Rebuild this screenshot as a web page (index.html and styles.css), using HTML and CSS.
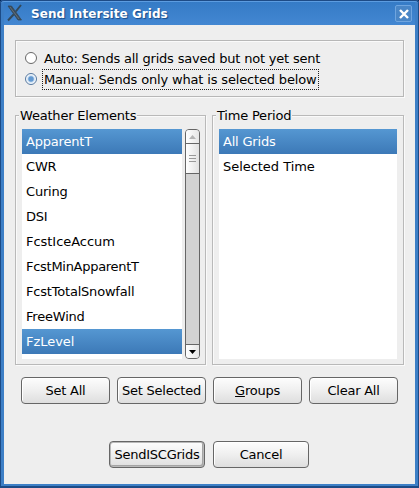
FILE: index.html
```html
<!DOCTYPE html>
<html lang="en">
<head>
<meta charset="utf-8">
<title>Send Intersite Grids</title>
<link rel="stylesheet" href="styles.css">
</head>
<body>
<div class="window">
  <header class="titlebar">
    <svg class="app-icon" width="16" height="18" viewBox="0 0 16 18">
      <path d="M1 2h3.5l10 14H11z" fill="#3d4b58" stroke="#34495a" stroke-width=".8"/>
      <path d="M14 1 8.8 7.5M6.8 10.2 1 16.5" stroke="#34495a" stroke-width="2"/>
      <path d="M3 3l9 12" stroke="#71818d" stroke-width=".7"/>
    </svg>
    <h1 class="title">Send Intersite Grids</h1>
    <button class="close" aria-label="Close">
      <svg width="10" height="10" viewBox="0 0 10 10"><path d="M1 1l8 8M9 1L1 9" stroke="#fff" stroke-width="2.4"/></svg>
    </button>
  </header>
  <main class="content">
    <section class="modes">
      <label class="mode"><span class="radio"></span><span class="mode-text">Auto: Sends all grids saved but not yet sent</span></label>
      <label class="mode"><span class="radio checked"></span><span class="mode-text focused">Manual: Sends only what is selected below</span></label>
    </section>
    <div class="panels">
      <section class="panel">
        <h2 class="legend">Weather Elements</h2>
        <div class="panel-body">
          <ul class="list">
            <li class="selected">ApparentT</li>
            <li>CWR</li>
            <li>Curing</li>
            <li>DSI</li>
            <li class="even">FcstIceAccum</li>
            <li class="tight">FcstMinApparentT</li>
            <li>FcstTotalSnowfall</li>
            <li>FreeWind</li>
            <li class="selected even">FzLevel</li>
          </ul>
          <div class="scrollbar">
            <div class="arrow up"><svg width="7" height="4" viewBox="0 0 7 4"><path d="M0 4 3.5 0 7 4z" fill="#b5b5b5"/></svg></div>
            <div class="thumb"><i></i><i></i><i></i></div>
            <div class="arrow down"><svg width="7" height="4" viewBox="0 0 7 4"><path d="M0 0h7L3.5 4z" fill="#000"/></svg></div>
          </div>
        </div>
      </section>
      <section class="panel">
        <h2 class="legend">Time Period</h2>
        <div class="panel-body">
          <ul class="list">
            <li class="selected">All Grids</li>
            <li class="even">Selected Time</li>
          </ul>
        </div>
      </section>
    </div>
    <div class="actions">
      <button class="btn">Set All</button>
      <button class="btn">Set Selected</button>
      <button class="btn"><span><u>G</u>roups</span></button>
      <button class="btn">Clear All</button>
    </div>
    <footer class="footer">
      <button class="btn default">SendISCGrids</button>
      <button class="btn">Cancel</button>
    </footer>
  </main>
</div>
</body>
</html>
```
FILE: styles.css
```css
* { box-sizing: border-box; }
body { margin: 0; background: #082b5c; font: 13px/16px "DejaVu Sans", sans-serif; color: #000; letter-spacing: -.2px; }
.window {
  width: 419px; height: 488px; padding: 0 4px 4px;
  display: flex; flex-direction: column;
  border-radius: 4px 4px 0 0;
  background: #3d7fc6;
  box-shadow: inset 0 1px #1d4b86, inset 1px 0 #1c4b86, inset -1px 0 #1c4b86, inset 0 -2px #1c4b86, inset 0 2px #5c9ce0;
}
.titlebar { height: 25px; display: flex; align-items: center; padding: 2px 3px 0; background: linear-gradient(transparent 2px, #357bc6 2px, #4387d2); }
.app-icon { margin: 0 8px 1px 0; }
.title { margin: 0; flex: 1; font-size: 12px; line-height: 16px; font-weight: bold; letter-spacing: .05px; color: #fff; text-shadow: 1px 1px 1px #174a88; }
.close { width: 17px; height: 17px; padding: 0; display: grid; place-items: center; border: 1px solid #6fa5df; border-radius: 2px; background: #4986c7; }
.content { flex: 1; background: #eee; padding: 15px 11px 0; }
.modes { height: 57px; padding: 9px 9px 0; border: 1px solid #b7b7b7; box-shadow: inset 1px 1px #fafafa, 1px 1px #fafafa; }
.mode { height: 22px; display: flex; align-items: center; margin-top: -3px; }
.mode + .mode { margin-top: -1px; }
.radio { width: 12px; height: 12px; margin-right: 5px; border: 1px solid #686868; border-radius: 50%; background: #fff; }
.radio.checked { border-color: #54779f; background: radial-gradient(circle, #6299d1 0 2.2px, #d2e3f4 3.4px, #fff 5px); }
.mode-text { height: 21px; padding: 2px 1px; border: 1px solid transparent; white-space: nowrap; }
.focused { border: 1px dotted #222; letter-spacing: -.16px; }
.panels { display: grid; grid-template-columns: 191px 192px; column-gap: 6px; width: 389px; margin-top: 18px; }
.panel { height: 250px; border: 1px solid #b9b9b9; box-shadow: inset 1px 1px #fafafa, 1px 1px #fafafa; padding: 0 6px; }
.legend { width: max-content; height: 16px; margin: -8px 0 0 -3px; padding: 0 1px; background: #eee; font-size: 13px; line-height: 16px; font-weight: normal; }
.panel-body { display: flex; gap: 3px; height: 230px; margin-top: 5px; }
.list { flex: 1; margin: 0; padding: 0; list-style: none; background: #fff; overflow: hidden; }
.list li { height: 25px; padding: 0 4px; line-height: 25px; }
.list .even { letter-spacing: -.04px; }
.list .tight { letter-spacing: -.28px; }
.list .selected { color: #fff; background: linear-gradient(#5597d2, #3c79b7); }
.scrollbar { width: 15px; height: 230px; margin-right: -1px; display: flex; flex-direction: column; border: 1px solid #666; border-radius: 4px; background: #d3d3d3; overflow: hidden; }
.arrow { height: 14px; display: grid; place-items: center; background: linear-gradient(90deg, #fff, #e6e6e6); }
.up { border-bottom: 1px solid #666; }
.down { margin-top: auto; border-top: 1px solid #666; }
.thumb { height: 30px; display: flex; flex-direction: column; align-items: center; justify-content: center; gap: 2px; border-bottom: 1px solid #666; background: linear-gradient(90deg, #fff, #e1e1e1); }
.thumb i { width: 7px; height: 1px; background: #999; }
.actions { display: flex; gap: 7px; margin: 12px 6px 0; }
.btn { height: 27px; flex: 1 1 0; padding: 0; font: inherit; letter-spacing: -.25px; color: #000; white-space: nowrap; border: 1px solid #666; border-radius: 4px; background: linear-gradient(#fdfdfd, #efefef 50%, #dedede); box-shadow: inset 1px 1px #fff; }
.footer { display: flex; gap: 8px; margin: 37px 95px 0 94px; }
.default { box-shadow: inset 0 0 0 1px #b9b9b9, inset -1px -1px 0 1px #a4a4a4; }
```
